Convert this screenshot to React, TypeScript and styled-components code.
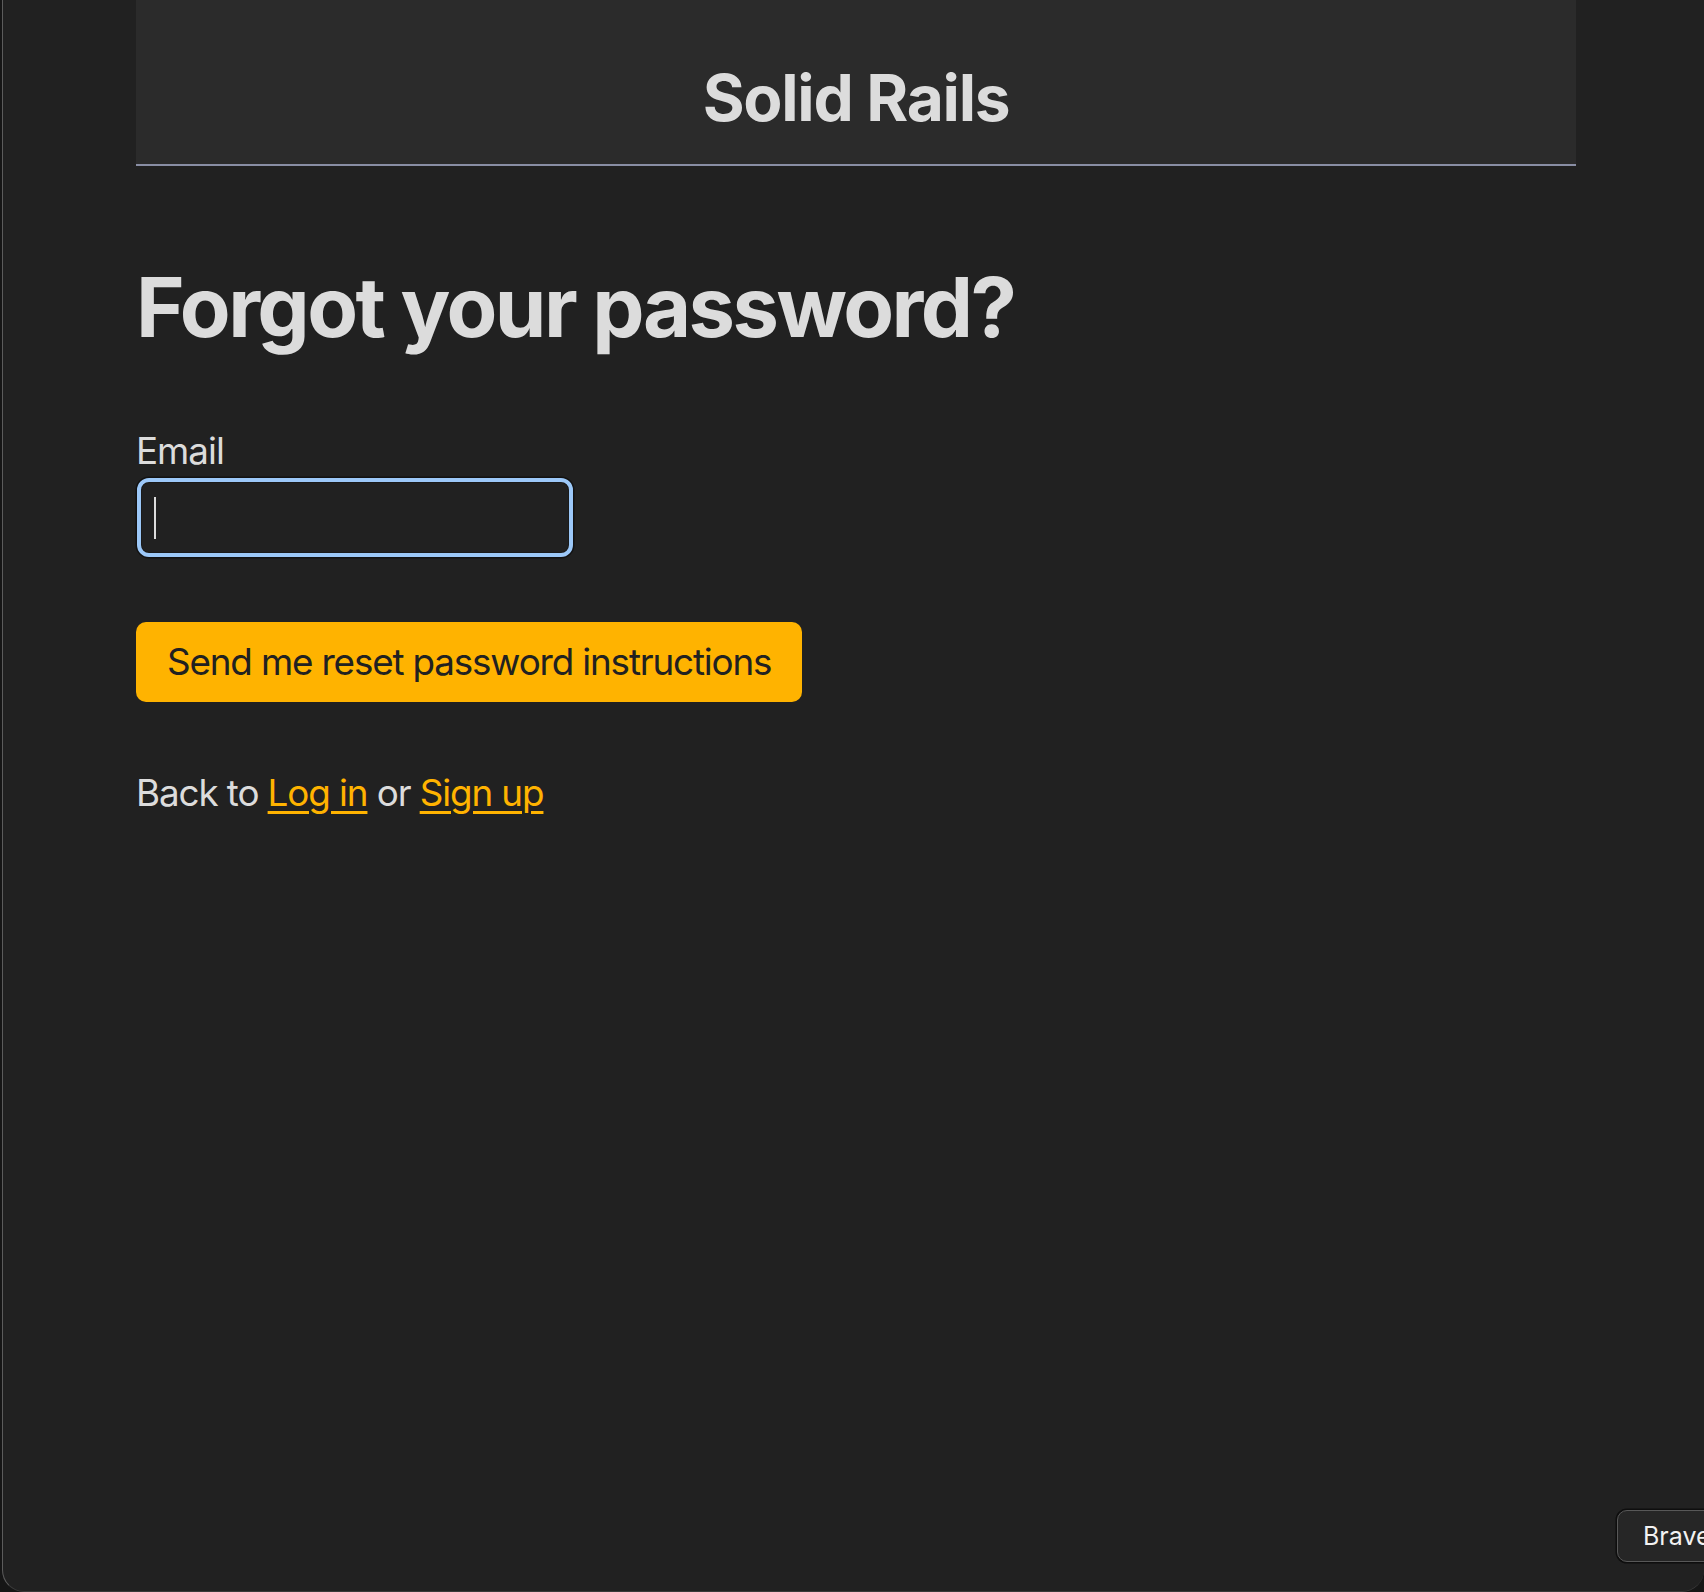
import React from "react";
import styled, { createGlobalStyle } from "styled-components";

const GlobalStyle = createGlobalStyle`
  html, body {
    margin: 0;
    padding: 0;
    background: #161616;
  }
  * { box-sizing: border-box; }
`;

const Window = styled.div`
  position: relative;
  margin-left: 2px;
  width: 1702px;
  height: 1592px;
  overflow: hidden;
  background: #212121;
  border-left: 1px solid #5c5c5c;
  border-bottom: 1px solid #3a3a3a;
  border-radius: 0 0 22px 22px;
  font-family: Inter, "Noto Sans", "Liberation Sans", sans-serif;
  color: #dcdcdc;
`;

const Column = styled.div`
  width: 1440px;
  margin-left: 133px;
  display: flex;
  flex-direction: column;
  align-items: flex-start;
`;

const Header = styled.header`
  align-self: stretch;
  height: 166px;
  padding-top: 66px;
  background: #2b2b2b;
  border-bottom: 2px solid #898ea4;
  text-align: center;
`;

const Brand = styled.div`
  font-size: 64px;
  line-height: 64px;
  font-weight: 700;
  letter-spacing: -1.3px;
  color: #dcdcdc;
`;

const Title = styled.h2`
  margin: 100px 0 0 0;
  font-size: 83px;
  line-height: 83px;
  font-weight: 700;
  letter-spacing: -2.55px;
  color: #dcdcdc;
`;

const Form = styled.form`
  display: flex;
  flex-direction: column;
  align-items: flex-start;
  margin-top: 84px;
`;

const Label = styled.label`
  font-size: 36.8px;
  line-height: 36.8px;
  letter-spacing: -1px;
  color: #dcdcdc;
`;

const InputWrap = styled.div`
  position: relative;
  margin-top: 8px;
`;

const Input = styled.input`
  display: block;
  width: 436px;
  height: 79px;
  margin-left: 1px;
  padding: 0 16px;
  background: #212121;
  border: 4px solid #9cc8f8;
  border-radius: 12px;
  box-shadow: 0 0 0 1.5px #121212, inset 0 0 0 1px #1a1a1a;
  font-family: inherit;
  font-size: 36.8px;
  color: #dcdcdc;
  outline: none;
`;

const Caret = styled.span`
  position: absolute;
  left: 18px;
  top: 19px;
  width: 2px;
  height: 42px;
  background: #dcdcdc;
`;

const Button = styled.button`
  margin-top: 65px;
  height: 80px;
  padding: 0 31px;
  background: #ffb300;
  border: none;
  border-radius: 10px;
  font-family: inherit;
  font-size: 36.8px;
  letter-spacing: -1.15px;
  color: #212121;
  cursor: pointer;
`;

const BackLine = styled.p`
  margin: 73px 0 0 0;
  font-size: 36.8px;
  line-height: 36.8px;
  letter-spacing: -1.1px;
  color: #dcdcdc;
`;

const Link = styled.a`
  color: #ffb300;
  text-decoration: underline;
  text-decoration-thickness: 3px;
  text-underline-offset: 5px;
`;

const BravePill = styled.div`
  position: absolute;
  left: 1614px;
  top: 1510px;
  width: 160px;
  height: 52px;
  padding-left: 25px;
  display: flex;
  align-items: center;
  background: #262626;
  border: 1.5px solid #585858;
  box-shadow: 0 0 0 1.5px #0e0e0e;
  border-radius: 10px;
  font-size: 25px;
  color: #f2f2f2;
`;

export default function App() {
  return (
    <>
      <GlobalStyle />
      <Window>
        <Column>
          <Header>
            <Brand>Solid Rails</Brand>
          </Header>
          <Title>Forgot your password?</Title>
          <Form onSubmit={(e) => e.preventDefault()}>
            <Label htmlFor="email">Email</Label>
            <InputWrap>
              <Input id="email" type="email" />
              <Caret />
            </InputWrap>
            <Button type="submit">Send me reset password instructions</Button>
          </Form>
          <BackLine>
            Back to <Link href="#">Log in</Link> or <Link href="#">Sign up</Link>
          </BackLine>
        </Column>
        <BravePill>Brave</BravePill>
      </Window>
    </>
  );
}
